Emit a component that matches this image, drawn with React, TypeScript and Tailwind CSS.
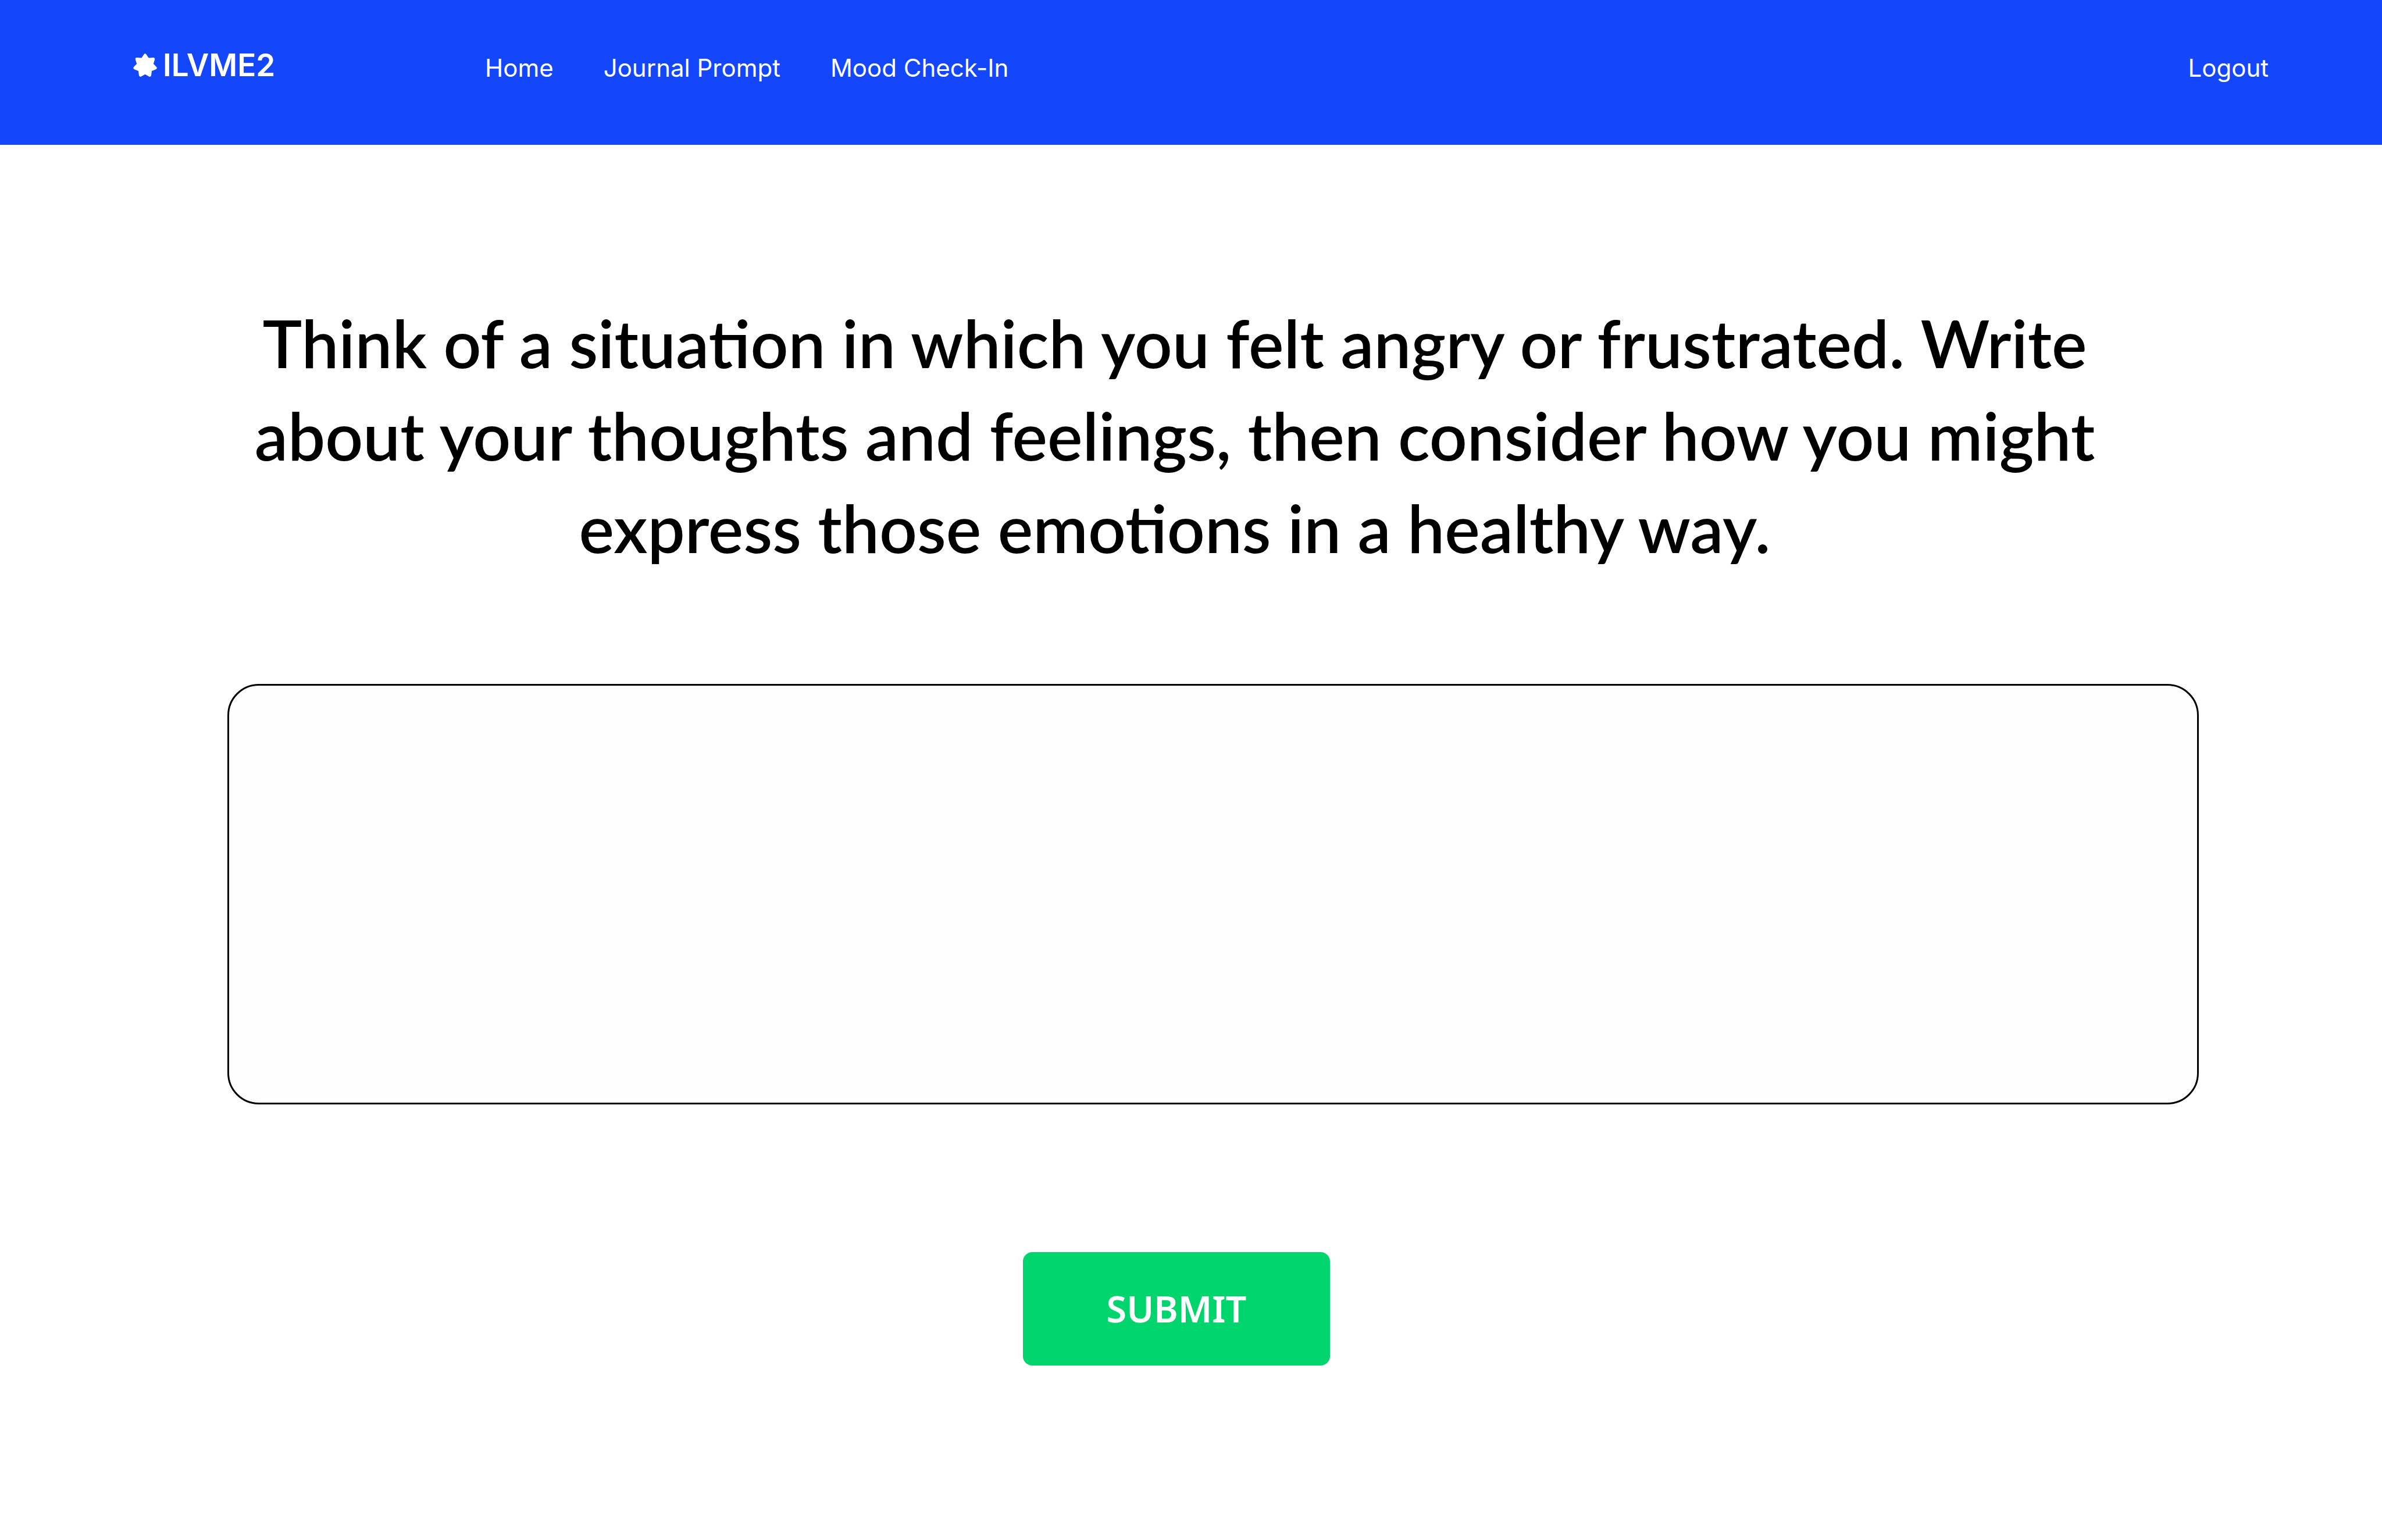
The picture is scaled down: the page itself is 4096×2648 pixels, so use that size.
const links = ["Home", "Journal Prompt", "Mood Check-In"];

function StarMark() {
  return (
    <svg viewBox="26 23 144 142" className="h-10 w-[41px]" aria-hidden="true">
      <path
        d="M98 34 L115 60 L148 57 L138 88 L160 111 L130 123 L126 155 L98 139 L70 155 L66 123 L36 111 L58 88 L48 57 L81 60 Z"
        fill="white"
        stroke="white"
        strokeWidth="19"
        strokeLinejoin="round"
      />
    </svg>
  );
}

export default function App() {
  return (
    <div className="min-h-screen bg-white font-['Inter',sans-serif] text-black">
      <header className="flex h-[249px] items-start bg-[#1447fc] pr-[195px] pl-[229px] text-white">
        <a href="#" className="flex w-[605px] items-center gap-2.5 pt-[79px] text-[53px] leading-[66px] font-semibold">
          <StarMark />
          ILVME2
        </a>
        <nav className="flex flex-1 gap-[86px] pt-[84px] text-[42px] leading-[66px] font-normal">
          {links.map((l) => (
            <a key={l} href="#">
              {l}
            </a>
          ))}
        </nav>
        <a href="#" className="pt-[84px] text-[42px] leading-[66px] font-normal">
          Logout
        </a>
      </header>
      <main className="pt-[260px] pr-[315px] pl-[391px]">
        <form onSubmit={(e) => e.preventDefault()}>
          <div className="pr-[132px]">
            <label
              htmlFor="entry"
              className="block text-center font-['Lato',sans-serif] text-[114px] leading-[159px] font-semibold"
            >
              Think of a situation in which you felt angry or frustrated. Write about your thoughts and feelings, then
              consider how you might express those emotions in a healthy way.
            </label>
          </div>
          <textarea
            id="entry"
            className="mt-[190px] block h-[723px] w-full resize-none rounded-[54px] border-[3px] border-black bg-[#fffdfe] p-12 text-[42px] outline-none"
          />
          <div className="mt-[254px] flex justify-center pr-[126px]">
            <button
              type="submit"
              className="h-[195px] w-[528px] rounded-2xl bg-[#00d46c] font-['Noto_Sans',sans-serif] text-[63px] font-semibold text-white"
            >
              SUBMIT
            </button>
          </div>
        </form>
      </main>
    </div>
  );
}
